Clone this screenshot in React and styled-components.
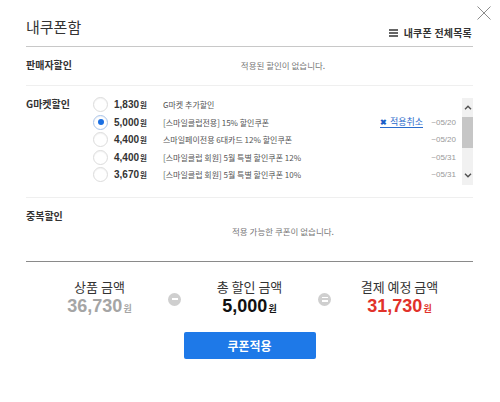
import React from 'react';
import styled, { createGlobalStyle } from 'styled-components';

const GlobalStyle = createGlobalStyle`
  body {
    margin: 0;
    background: #fff;
    font-family: "Noto Sans CJK KR", "Noto Sans", sans-serif;
    color: #333;
  }
`;

const Popup = styled.div`
  position: relative;
  width: 500px;
  height: 402px;
  padding: 0 27px 0 26px;
  box-sizing: border-box;
  background: #fff;
`;

const CloseButton = styled.button`
  position: absolute;
  top: 5px;
  right: 8px;
  width: 16px;
  height: 16px;
  padding: 0;
  border: none;
  background: none;
  cursor: pointer;
`;

const Header = styled.div`
  display: flex;
  justify-content: space-between;
  align-items: flex-end;
  height: 46px;
  border-bottom: 1px solid #c8c8c8;
`;

const Title = styled.h1`
  margin: 0 0 9px;
  font-size: 15px;
  line-height: 20px;
  font-weight: 400;
  color: #333;
`;

const ListLink = styled.a`
  display: flex;
  align-items: center;
  gap: 6px;
  margin: 0 1px 7px 0;
  font-size: 10px;
  line-height: 12px;
  font-weight: 700;
  letter-spacing: 0.2px;
  color: #333;
  cursor: pointer;
`;

const Section = styled.div`
  display: grid;
  grid-template-columns: 67px 1fr;
  padding: ${p => p.$pad};
  border-bottom: 1px solid ${p => (p.$strong ? '#8a8a8a' : '#efefef')};
`;

const SectionLabel = styled.div`
  padding-top: ${p => p.$top || 0}px;
  font-size: 10px;
  line-height: 14px;
  font-weight: 700;
  color: #333;
`;

const EmptyText = styled.div`
  padding-top: ${p => p.$top || 0}px;
  text-align: center;
  font-size: 8.5px;
  line-height: 14px;
  color: #777;
`;

const CouponArea = styled.div`
  display: flex;
  gap: 6px;
`;

const CouponList = styled.div`
  flex: 1;
  display: flex;
  flex-direction: column;
`;

const CouponRow = styled.label`
  display: flex;
  align-items: center;
  height: 17.5px;
  cursor: pointer;
`;

const Radio = styled.span`
  position: relative;
  flex: none;
  width: 13px;
  height: 13px;
  border-radius: 50%;
  border: 1px solid ${p => (p.$checked ? '#a9c4ea' : '#dcdcdc')};
  background: #fff;
  box-shadow: inset 0 1px 1px rgba(0, 0, 0, 0.05);

  &::after {
    content: '';
    display: ${p => (p.$checked ? 'block' : 'none')};
    position: absolute;
    top: 3.5px;
    left: 3.5px;
    width: 6px;
    height: 6px;
    border-radius: 50%;
    background: #1a6fe3;
  }
`;

const Amount = styled.span`
  flex: none;
  width: 49px;
  margin-left: 6px;
  font-family: "Liberation Sans", Arial, sans-serif;
  font-size: 10px;
  font-weight: 700;
  color: #333;

  small {
    font-family: "Noto Sans CJK KR", sans-serif;
    font-size: 7.5px;
    font-weight: 700;
    margin-left: 1px;
  }
`;

const Description = styled.span`
  flex: 1;
  font-size: 8px;
  color: #555;
  white-space: nowrap;
`;

const CancelLink = styled.a`
  display: flex;
  align-items: center;
  gap: 3px;
  margin-right: 7px;
  font-size: 9px;
  line-height: 11px;
  color: #2a6ccc;
  border-bottom: 1px solid #2a6ccc;
  cursor: pointer;

  b {
    font-size: 8px;
    color: #1a5fc8;
  }
`;

const DateText = styled.span`
  width: 26px;
  text-align: right;
  font-family: "Liberation Sans", Arial, sans-serif;
  font-size: 8px;
  color: #999;
`;

const Scrollbar = styled.div`
  flex: none;
  display: flex;
  flex-direction: column;
  align-items: center;
  width: 11px;
  height: 87px;
  margin-top: 2px;
  background: #f1f1f1;
`;

const ScrollArrow = styled.div`
  display: flex;
  align-items: center;
  justify-content: center;
  width: 11px;
  height: 19px;
`;

const ScrollThumb = styled.div`
  width: 11px;
  height: 31px;
  background: #c6c6c6;
`;

const ScrollSpace = styled.div`
  flex: 1;
`;

const Summary = styled.div`
  display: flex;
  justify-content: center;
  align-items: center;
  padding-top: 16px;
`;

const SumColumn = styled.div`
  width: 100px;
  display: flex;
  flex-direction: column;
  align-items: center;
`;

const SumLabel = styled.div`
  font-size: 13px;
  line-height: 18px;
  color: #333;
  white-space: nowrap;
`;

const SumValue = styled.div`
  font-family: "Liberation Sans", Arial, sans-serif;
  font-size: 18px;
  line-height: 20px;
  font-weight: 700;
  color: ${p => p.$color};
  white-space: nowrap;

  small {
    font-family: "Noto Sans CJK KR", sans-serif;
    font-size: 9px;
    font-weight: 700;
    margin-left: 1px;
  }
`;

const Operator = styled.div`
  width: 50px;
  display: flex;
  justify-content: center;
  padding-top: 1px;
`;

const OperatorCircle = styled.span`
  display: flex;
  flex-direction: column;
  align-items: center;
  justify-content: center;
  gap: 2px;
  width: 13px;
  height: 13px;
  border-radius: 50%;
  background: #cfcfcf;

  i {
    display: block;
    width: 6px;
    height: 1.5px;
    background: #fff;
  }
`;

const ApplyButton = styled.button`
  display: block;
  width: 132px;
  height: 27px;
  margin: 13px auto 0;
  border: none;
  border-radius: 2px;
  background: #1e79e8;
  color: #fff;
  font-family: "Noto Sans CJK KR", sans-serif;
  font-size: 12px;
  font-weight: 700;
  cursor: pointer;
`;

const coupons = [
  { amount: '1,830', text: 'G마켓 추가할인', date: '', checked: false },
  { amount: '5,000', text: '[스마일클럽전용] 15% 할인쿠폰', date: '~05/20', checked: true },
  { amount: '4,400', text: '스마일페이전용 6대카드 12% 할인쿠폰', date: '~05/20', checked: false },
  { amount: '4,400', text: '[스마일클럽 회원] 5월 특별 할인쿠폰 12%', date: '~05/31', checked: false },
  { amount: '3,670', text: '[스마일클럽 회원] 5월 특별 할인쿠폰 10%', date: '~05/31', checked: false },
];

const Chevron = ({ up }) => (
  <svg width="8" height="5" viewBox="0 0 8 5">
    <path
      d={up ? 'M1 4.2 L4 1.2 L7 4.2' : 'M1 0.8 L4 3.8 L7 0.8'}
      fill="none"
      stroke="#505050"
      strokeWidth="1.4"
    />
  </svg>
);

export default function App() {
  return (
    <>
      <GlobalStyle />
      <Popup>
        <CloseButton aria-label="닫기">
          <svg width="16" height="16" viewBox="0 0 16 16">
            <path d="M1.5 1.5 L14.5 14.5 M14.5 1.5 L1.5 14.5" stroke="#8c8c8c" strokeWidth="1" />
          </svg>
        </CloseButton>

        <Header>
          <Title>내쿠폰함</Title>
          <ListLink>
            <svg width="9" height="8" viewBox="0 0 9 8">
              <path d="M0 1 H9 M0 4 H9 M0 7 H9" stroke="#333" strokeWidth="1.4" />
            </svg>
            내쿠폰 전체목록
          </ListLink>
        </Header>

        <Section $pad="11px 0 13px">
          <SectionLabel>판매자할인</SectionLabel>
          <EmptyText>적용된 할인이 없습니다.</EmptyText>
        </Section>

        <Section $pad="10px 0 12px">
          <SectionLabel $top={1}>G마켓할인</SectionLabel>
          <CouponArea>
            <CouponList>
              {coupons.map((c, i) => (
                <CouponRow key={i}>
                  <Radio $checked={c.checked} />
                  <Amount>
                    {c.amount}
                    <small>원</small>
                  </Amount>
                  <Description>{c.text}</Description>
                  {c.checked && (
                    <CancelLink>
                      <b>✖</b>적용취소
                    </CancelLink>
                  )}
                  <DateText>{c.date}</DateText>
                </CouponRow>
              ))}
            </CouponList>
            <Scrollbar>
              <ScrollArrow>
                <Chevron up />
              </ScrollArrow>
              <ScrollThumb />
              <ScrollSpace />
              <ScrollArrow>
                <Chevron />
              </ScrollArrow>
            </Scrollbar>
          </CouponArea>
        </Section>

        <Section $pad="11px 0 23px" $strong>
          <SectionLabel>중복할인</SectionLabel>
          <EmptyText $top={15}>적용 가능한 쿠폰이 없습니다.</EmptyText>
        </Section>

        <Summary>
          <SumColumn>
            <SumLabel>상품 금액</SumLabel>
            <SumValue $color="#a5a5a5">
              36,730<small>원</small>
            </SumValue>
          </SumColumn>
          <Operator>
            <OperatorCircle>
              <i />
            </OperatorCircle>
          </Operator>
          <SumColumn>
            <SumLabel>총 할인 금액</SumLabel>
            <SumValue $color="#111">
              5,000<small>원</small>
            </SumValue>
          </SumColumn>
          <Operator>
            <OperatorCircle>
              <i />
              <i />
            </OperatorCircle>
          </Operator>
          <SumColumn>
            <SumLabel>결제 예정 금액</SumLabel>
            <SumValue $color="#e1322a">
              31,730<small>원</small>
            </SumValue>
          </SumColumn>
        </Summary>

        <ApplyButton>쿠폰적용</ApplyButton>
      </Popup>
    </>
  );
}
